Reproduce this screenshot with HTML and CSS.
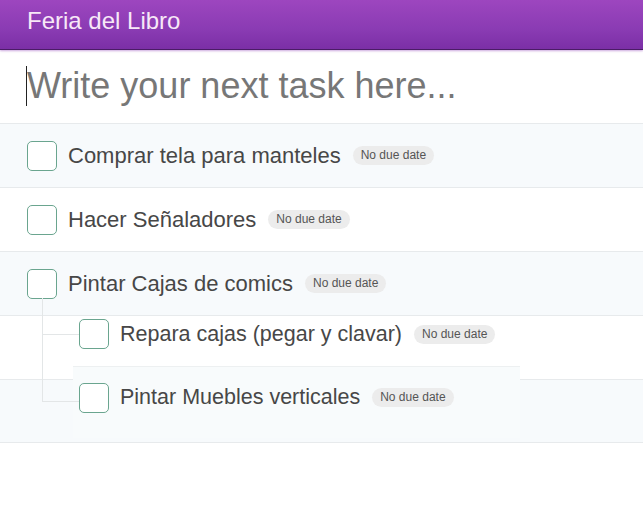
FILE: index.html
```html
<!DOCTYPE html>
<html lang="es">
<head>
<meta charset="utf-8">
<title>Feria del Libro</title>
<link rel="stylesheet" href="styles.css">
</head>
<body>
<header class="topbar">
  <h1 class="title">Feria del Libro</h1>
</header>
<div class="new-task">
  <span class="caret"></span>
  <span class="placeholder">Write your next task here...</span>
</div>
<div class="tasks">
  <div class="row alt">
    <span class="check"></span>
    <span class="label">Comprar tela para manteles</span>
    <span class="badge">No due date</span>
  </div>
  <div class="row">
    <span class="check"></span>
    <span class="label">Hacer Señaladores</span>
    <span class="badge">No due date</span>
  </div>
  <div class="row alt">
    <span class="check"></span>
    <span class="label">Pintar Cajas de comics</span>
    <span class="badge">No due date</span>
  </div>
  <div class="row"></div>
  <div class="row alt last"></div>

  <div class="subtasks">
    <span class="tree tree-v"></span>
    <span class="tree tree-h1"></span>
    <span class="tree tree-h2"></span>
    <div class="subrow first">
      <span class="check"></span>
      <span class="label">Repara cajas (pegar y clavar)</span>
      <span class="badge">No due date</span>
    </div>
    <div class="subrow second">
      <span class="check"></span>
      <span class="label">Pintar Muebles verticales</span>
      <span class="badge">No due date</span>
    </div>
  </div>
</div>
</body>
</html>
```

FILE: styles.css
```css
* { box-sizing: border-box; }
html, body { margin: 0; padding: 0; background: #ffffff; }
body {
  font-family: "Liberation Sans", Arial, sans-serif;
  width: 643px;
  height: 514px;
  overflow: hidden;
}
.topbar {
  height: 50px;
  background: linear-gradient(to bottom, #9d46bf 0%, #8a3bb3 60%, #7b2fa6 100%);
  border-bottom: 1px solid #4b1c66;
  box-shadow: 0 1px 2px rgba(170, 110, 200, 0.6);
  display: flex;
  align-items: center;
  padding-left: 27px;
}
.title {
  margin: 0;
  font-weight: normal;
  font-size: 24px;
  color: #f7e8f7;
  padding-bottom: 7px;
}
.new-task {
  height: 73px;
  display: flex;
  align-items: center;
  padding-left: 26px;
  padding-bottom: 2px;
}
.caret {
  width: 1px;
  height: 40px;
  background: #222;
}
.placeholder {
  font-size: 36px;
  color: #777777;
}
.tasks { position: relative; }
.row {
  height: 64px;
  border-top: 1px solid #e7eaec;
  display: flex;
  align-items: center;
  padding-left: 27px;
  background: #ffffff;
}
.row.alt { background: #f7fafc; }
.row.last { border-bottom: 1px solid #e7eaec; }
.check {
  width: 30px;
  height: 30px;
  border: 1px solid #6aa58f;
  border-radius: 5px;
  background: #ffffff;
  flex: none;
}
.label {
  font-size: 22px;
  color: #474747;
  margin-left: 11px;
}
.badge {
  margin-left: 12px;
  font-size: 12px;
  color: #555555;
  background: #ececec;
  border-radius: 10px;
  padding: 3px 8px;
  line-height: 13px;
}
.subtasks {
  position: absolute;
  left: 22px;
  top: 193px;
  width: 498px;
  padding-left: 57px;
}
.subrow {
  display: flex;
  align-items: center;
  position: relative;
}
.subrow .label { margin-left: 11px; font-size: 21.5px; }
.subrow.first {
  height: 50px;
  background: #ffffff;
  margin-left: -57px;
  padding-left: 57px;
  padding-bottom: 14px;
}
.subrow.second {
  height: 72px;
  background: #f8fbfc;
  border-top: 1px solid #edf0f1;
  margin-left: -6px;
  padding-left: 6px;
  padding-bottom: 10px;
}
.tree {
  position: absolute;
  background: #e3e6e7;
  z-index: 1;
}
.tree-v { left: 20px; top: -18px; width: 1px; height: 104px; }
.tree-h1 { left: 20px; top: 18px; width: 37px; height: 1px; }
.tree-h2 { left: 20px; top: 85px; width: 37px; height: 1px; }
```
